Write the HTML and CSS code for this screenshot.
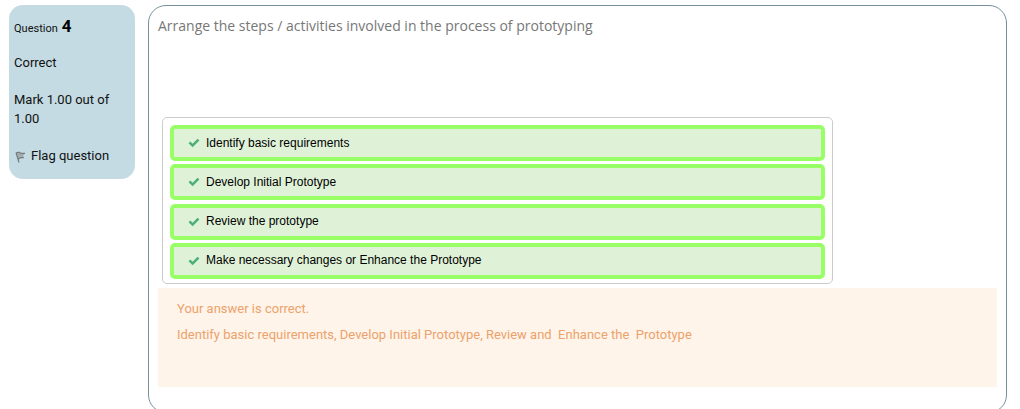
FILE: index.html
```html
<!DOCTYPE html>
<html lang="en">
<head>
<meta charset="utf-8">
<meta name="viewport" content="width=device-width, initial-scale=1">
<title>Question 4</title>
<link rel="stylesheet" href="styles.css">
</head>
<body>
<svg class="sprite" aria-hidden="true">
  <symbol id="check" viewBox="0 0 12 10"><path d="M0.6 5.2 2.3 3.4 4.6 5.7 9.6 0.8 11.4 2.5 4.6 9.3Z"/></symbol>
</svg>
<main class="question">
  <aside class="info">
    <h1 class="info-title">Question <strong class="info-number">4</strong></h1>
    <div class="info-body">
      <p>Correct</p>
      <p>Mark 1.00 out of 1.00</p>
      <button class="flag" type="button">
        <svg class="flag-icon" viewBox="0 0 12 12" aria-hidden="true"><path class="flag-cloth" d="M2 2 5 1.2 7 2.4 11 2.4 9.4 4.4 9.6 6.6 6.5 6.4 4.5 8Z"/><path class="flag-pole" d="M2 1.5 5 11.5M4.5 8 6.8 6.5 9.8 6.6M2 2 5 1.2 7 2.4 11 2.4"/></svg>
        <span>Flag question</span>
      </button>
    </div>
  </aside>
  <section class="content">
    <p class="prompt">Arrange the steps / activities involved in the process of prototyping</p>
    <ol class="steps">
      <li class="step"><svg class="check" aria-hidden="true"><use href="#check"/></svg>Identify basic requirements</li>
      <li class="step"><svg class="check" aria-hidden="true"><use href="#check"/></svg>Develop Initial Prototype</li>
      <li class="step"><svg class="check" aria-hidden="true"><use href="#check"/></svg>Review the prototype</li>
      <li class="step"><svg class="check" aria-hidden="true"><use href="#check"/></svg>Make necessary changes or Enhance the Prototype</li>
    </ol>
    <div class="feedback">
      <p class="feedback-line">Your answer is correct.</p>
      <p class="feedback-line">Identify basic requirements, Develop Initial Prototype, Review and&nbsp; Enhance the&nbsp; Prototype</p>
    </div>
  </section>
</main>
</body>
</html>
```
FILE: styles.css
```css
* { box-sizing: border-box; }
html { scrollbar-width: none; }
body {
  margin: 0;
  background: #fff;
  color: #111;
  font-family: Roboto, "Noto Sans", sans-serif;
  font-size: 13px;
  line-height: 19px;
}
p, h1, ol { margin: 0; padding: 0; }
.sprite { display: none; }
.question {
  display: flex;
  align-items: flex-start;
  gap: 13px;
  padding: 5px 13px 0 9px;
}
.info {
  flex: 0 0 126px;
  display: flex;
  flex-direction: column;
  gap: 16px;
  padding: 13px 5px 14px;
  border-radius: 14px;
  background: #c4dbe3;
}
.info-title {
  display: flex;
  align-items: baseline;
  gap: 4px;
  font-size: 11px;
  font-weight: 400;
  line-height: 16px;
}
.info-number { font-size: 17px; font-weight: 700; line-height: 1; color: #000; }
.info-body {
  display: flex;
  flex-direction: column;
  align-items: flex-start;
  gap: 18px;
}
.flag {
  display: flex;
  align-items: center;
  gap: 5px;
  padding: 0;
  border: 0;
  background: none;
  color: inherit;
  font: inherit;
  cursor: pointer;
}
.flag-icon { width: 12px; height: 12px; margin-top: 2px; }
.flag-cloth { fill: #a3aeb0; }
.flag-pole { fill: none; stroke: #747c7e; stroke-width: 1.2; }
.content {
  flex: 1;
  min-width: 0;
  padding: 10px 9px 25px;
  border: 1px solid #75909b;
  border-radius: 18px;
}
.prompt { color: #777; font-family: "Open Sans", sans-serif; font-size: 14px; line-height: 20px; }
.steps {
  display: flex;
  flex-direction: column;
  justify-content: space-between;
  width: 80%;
  min-height: 167px;
  margin: 81px 0 4px 4px;
  padding: 7px 7px 4px;
  border: 1px solid #ccc;
  border-radius: 5px;
  list-style: none;
}
.step {
  display: flex;
  align-items: center;
  gap: 6px;
  min-height: 36px;
  padding: 0 14px;
  border: 4px solid #9f6;
  border-radius: 5px;
  background: #dff2d8;
  color: #000;
  font-family: "Liberation Sans", Arial, sans-serif;
  font-size: 12px;
}
.check { width: 12px; height: 10px; fill: #4caf78; }
.feedback {
  min-height: 99px;
  padding: 11px 19px;
  background: #fff4ea;
  color: #eca26b;
}
.feedback-line { margin-bottom: 7px; }
```
